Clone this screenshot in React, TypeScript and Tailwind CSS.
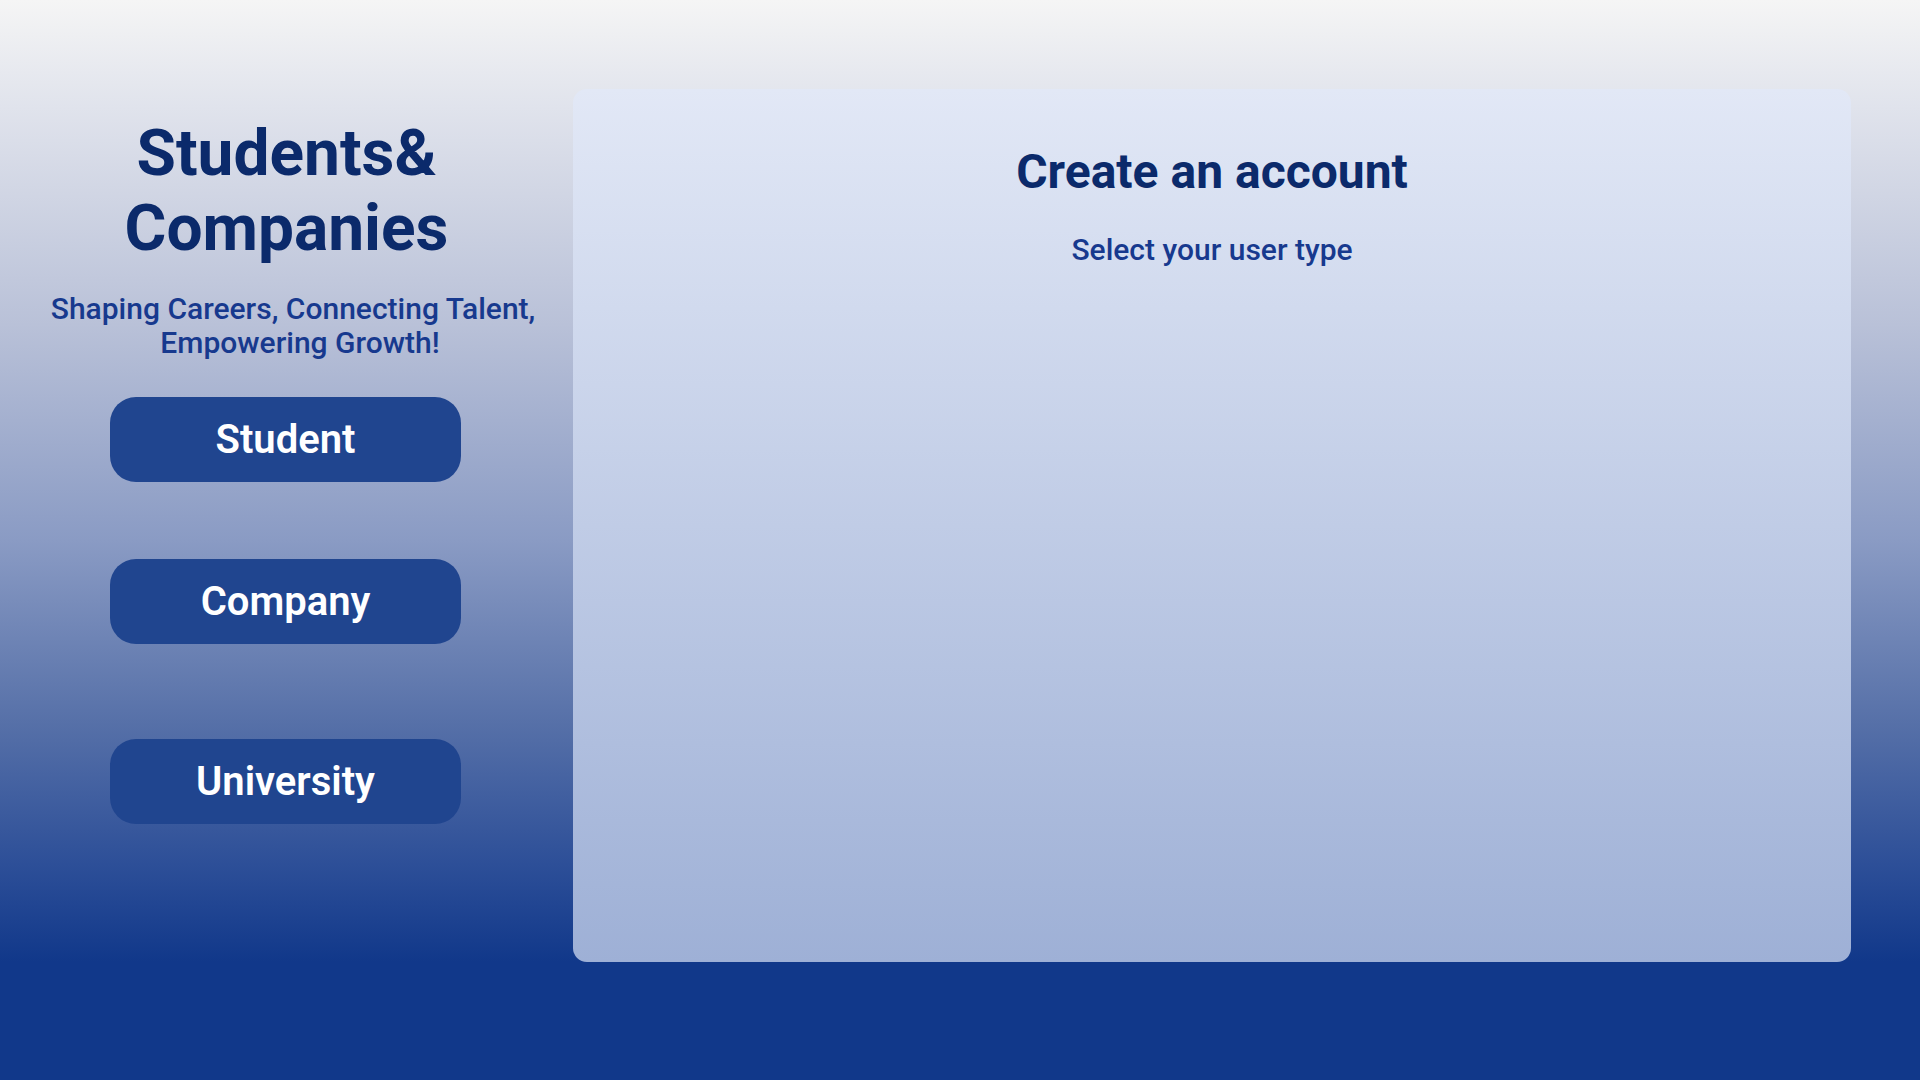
import React from "react";

export default function App() {
  return (
    <div
      className="w-full h-screen flex bg-[linear-gradient(180deg,#f5f5f5_0%,#e0e3ec_10%,#b9c1d8_30%,#8a9bc4_50%,#5670a8_67%,#2d4f98_80%,#11388a_89%,#11388a_100%)]"
      style={{ fontFamily: "Roboto, 'Noto Sans', Arial, sans-serif" }}
    >
      <div className="w-[573px] shrink-0 flex flex-col items-center pt-[116px]">
        <h1 className="text-[64px] leading-[75px] font-bold text-[#0b2a6b] text-center">
          Students&amp;
          <br />
          Companies
        </h1>
        <div className="mt-[26px] text-[30px] leading-[34px] font-medium text-[#17398e] text-center w-full">
          <div className="pl-[13px]">Shaping Careers, Connecting Talent,</div>
          <div className="pl-[27px]">Empowering Growth!</div>
        </div>
        <div className="flex flex-col items-center pr-[2px]">
          <button className="mt-[37px] w-[351px] h-[85px] rounded-[26px] bg-[#20458f] text-white text-[40px] font-semibold">
            Student
          </button>
          <button className="mt-[77px] w-[351px] h-[85px] rounded-[26px] bg-[#20458f] text-white text-[40px] font-semibold">
            Company
          </button>
          <button className="mt-[95px] w-[351px] h-[85px] rounded-[26px] bg-[#20458f] text-white text-[40px] font-semibold">
            University
          </button>
        </div>
      </div>
      <div className="flex-1 pt-[89px] pr-[69px] pb-[118px]">
        <div className="h-full rounded-[14px] bg-[linear-gradient(180deg,#e2e8f6_0%,#9eb0d6_100%)] flex flex-col items-center pt-[55px]">
          <h2 className="text-[48px] leading-[56px] font-bold text-[#0b2a6b]">
            Create an account
          </h2>
          <p className="mt-[33px] text-[30px] leading-[34px] font-medium text-[#17398e]">
            Select your user type
          </p>
        </div>
      </div>
    </div>
  );
}
